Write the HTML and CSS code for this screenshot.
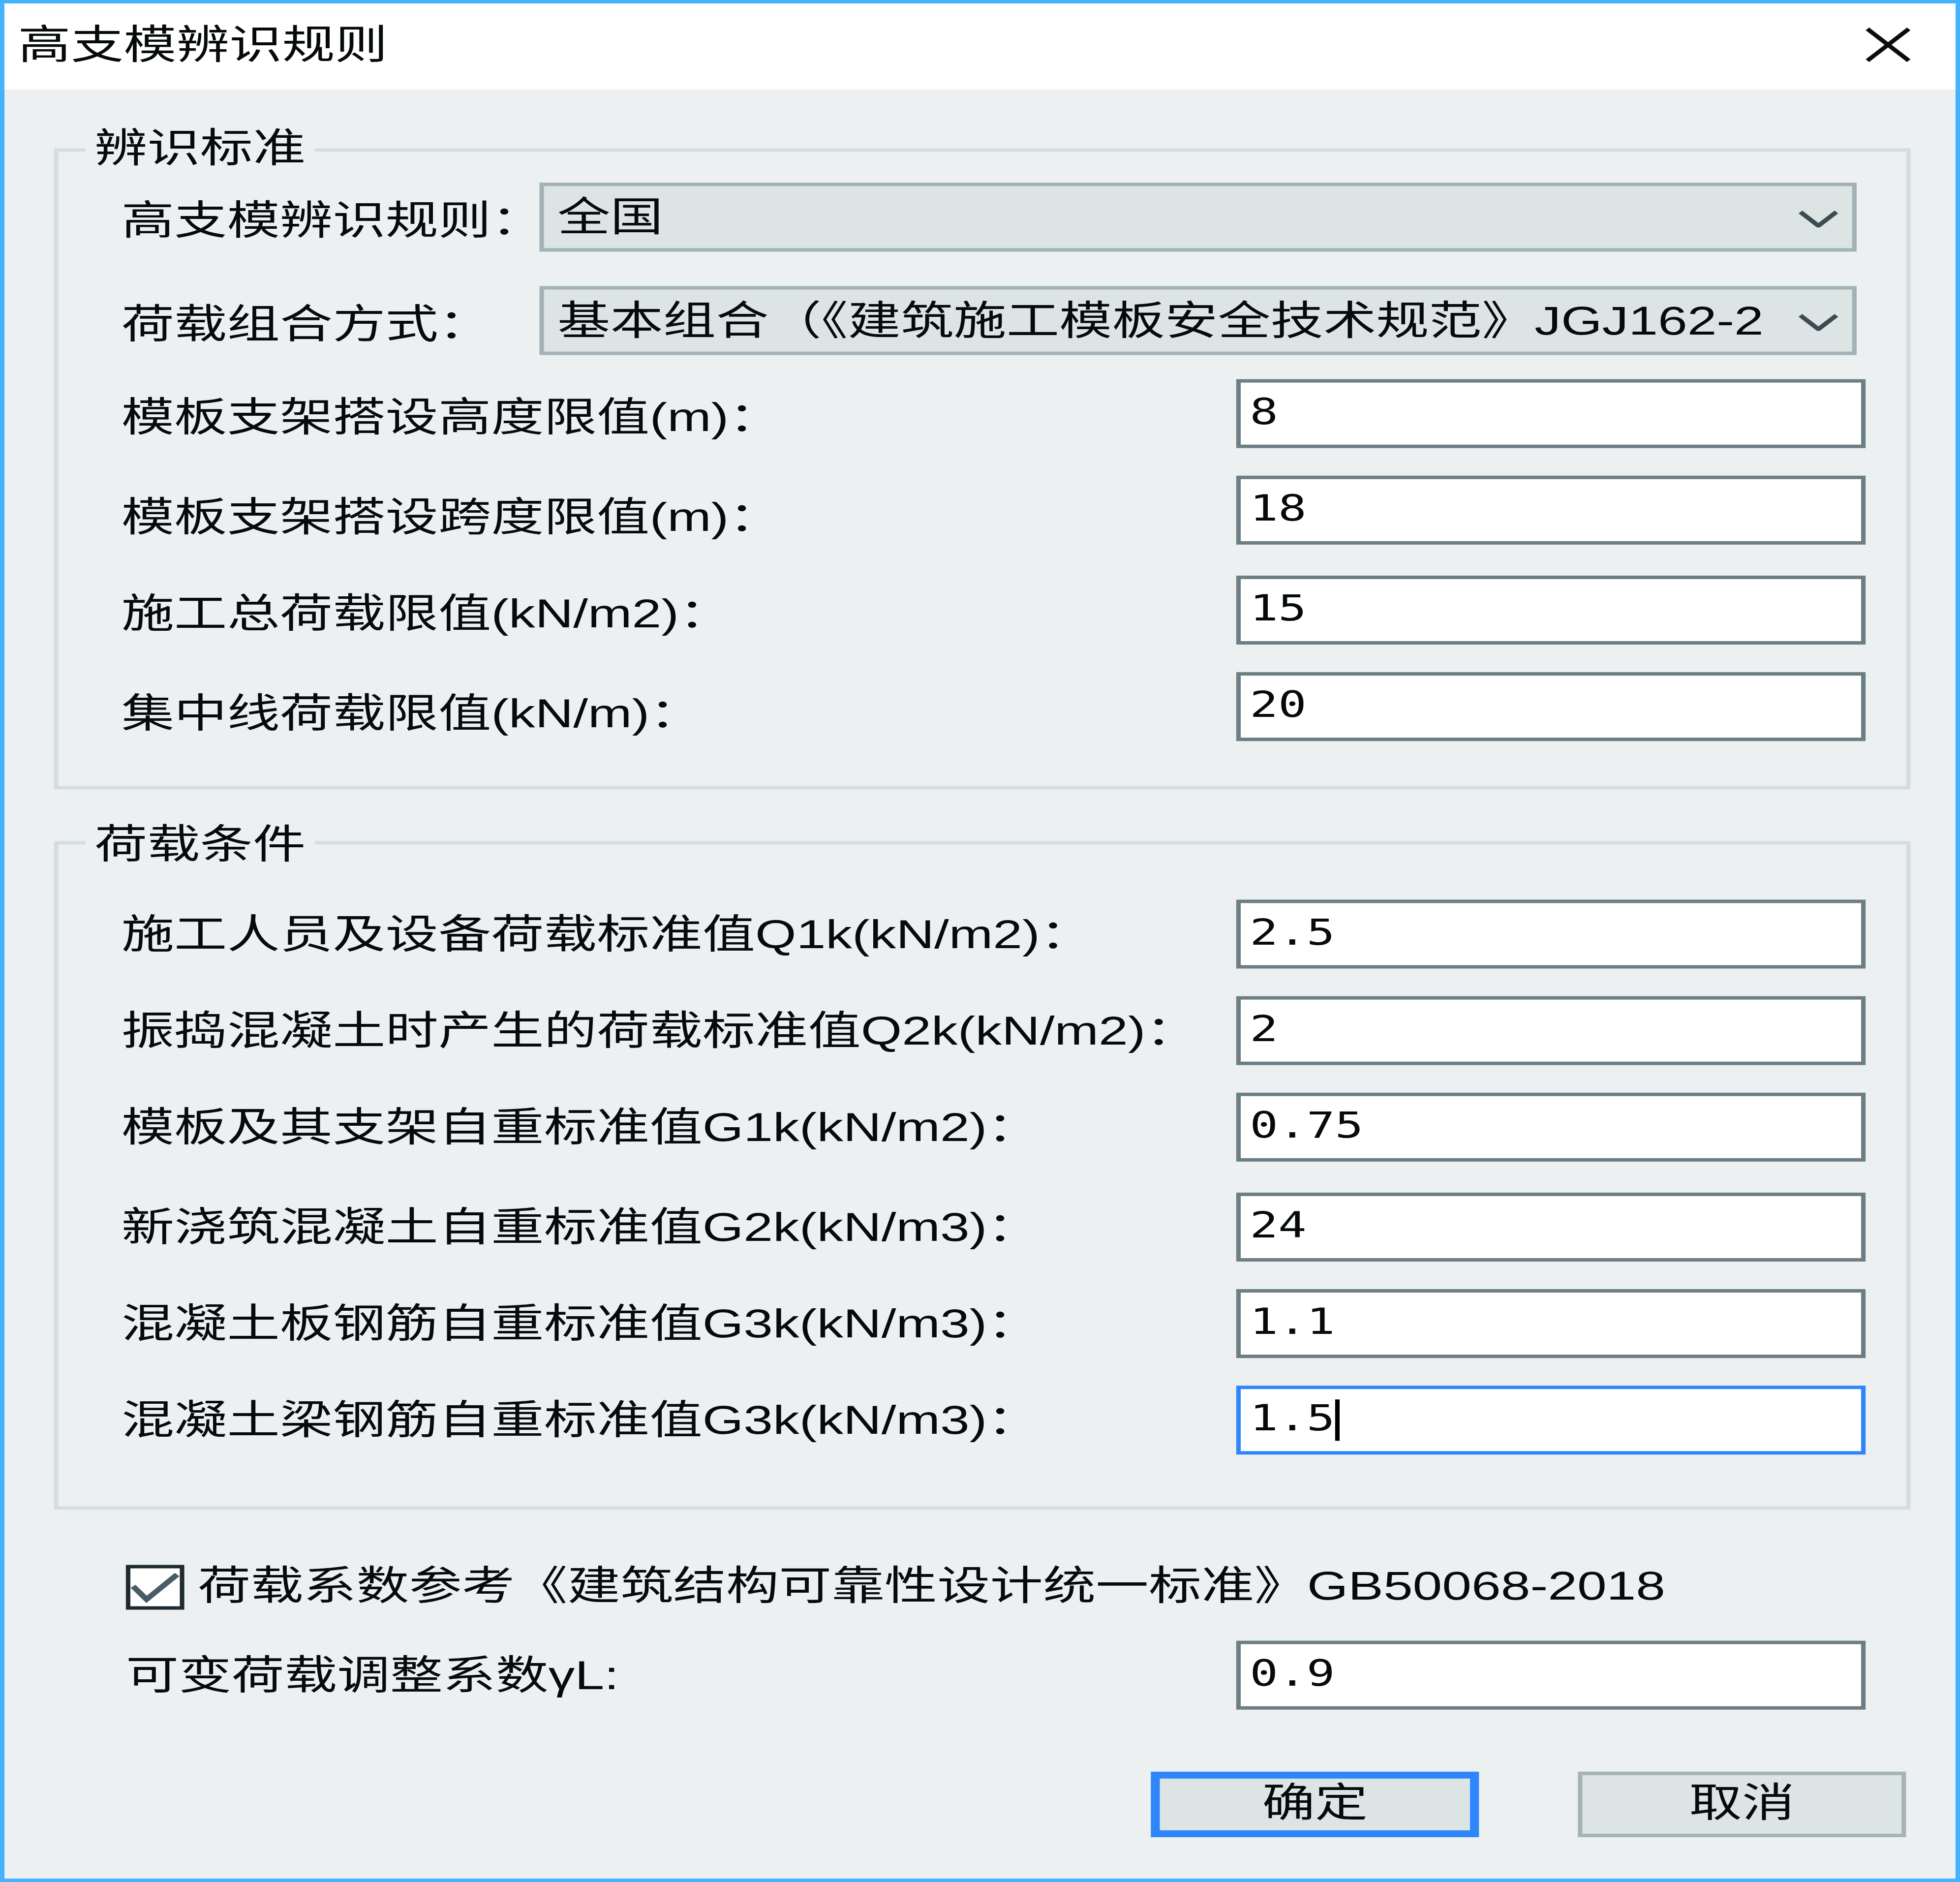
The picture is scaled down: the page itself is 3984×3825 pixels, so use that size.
FILE: index.html
```html
<!DOCTYPE html>
<html lang="zh-CN">
<head>
    <meta charset="UTF-8">
    <meta name="viewport" content="width=device-width, initial-scale=1.0">
    <title>高支模辨识规则</title>
    <link rel="stylesheet" href="styles.css">
</head>
<body>
    <div class="dialog">
        <div class="titlebar">
            <span class="title">高支模辨识规则</span>
            <svg class="close" viewBox="0 0 10 10" width="10" height="10">
                <path d="M0.4 0.4 L9.6 9.6 M9.6 0.4 L0.4 9.6" />
            </svg>
        </div>

        <div class="content">
            <!-- 辨识标准 -->
            <fieldset class="group group-rules">
                <legend>辨识标准</legend>
                <div class="row row-first">
                    <span class="label">高支模辨识规则：</span>
                    <div class="select">
                        <span class="select-text">全国</span>
                        <svg class="arrow" viewBox="0 0 9 5" width="9" height="5"><path d="M0.5 0.5 L4.5 4.5 L8.5 0.5" /></svg>
                    </div>
                </div>
                <div class="row row-select2">
                    <span class="label">荷载组合方式：</span>
                    <div class="select">
                        <span class="select-text">基本组合（《建筑施工模板安全技术规范》JGJ162-2</span>
                        <svg class="arrow" viewBox="0 0 9 5" width="9" height="5"><path d="M0.5 0.5 L4.5 4.5 L8.5 0.5" /></svg>
                    </div>
                </div>
                <div class="row row-input row-after-select">
                    <span class="label">模板支架搭设高度限值(m)：</span>
                    <div class="field">8</div>
                </div>
                <div class="row row-input">
                    <span class="label">模板支架搭设跨度限值(m)：</span>
                    <div class="field">18</div>
                </div>
                <div class="row row-input">
                    <span class="label">施工总荷载限值(kN/m2)：</span>
                    <div class="field">15</div>
                </div>
                <div class="row row-input">
                    <span class="label">集中线荷载限值(kN/m)：</span>
                    <div class="field">20</div>
                </div>
            </fieldset>

            <!-- 荷载条件 -->
            <fieldset class="group group-loads">
                <legend>荷载条件</legend>
                <div class="row row-input row-first">
                    <span class="label">施工人员及设备荷载标准值Q1k(kN/m2)：</span>
                    <div class="field">2.5</div>
                </div>
                <div class="row row-input">
                    <span class="label">振捣混凝土时产生的荷载标准值Q2k(kN/m2)：</span>
                    <div class="field">2</div>
                </div>
                <div class="row row-input">
                    <span class="label">模板及其支架自重标准值G1k(kN/m2)：</span>
                    <div class="field">0.75</div>
                </div>
                <div class="row row-input">
                    <span class="label">新浇筑混凝土自重标准值G2k(kN/m3)：</span>
                    <div class="field">24</div>
                </div>
                <div class="row row-input">
                    <span class="label">混凝土板钢筋自重标准值G3k(kN/m3)：</span>
                    <div class="field">1.1</div>
                </div>
                <div class="row row-input">
                    <span class="label">混凝土梁钢筋自重标准值G3k(kN/m3)：</span>
                    <div class="field focused">1.5<span class="caret"></span></div>
                </div>
            </fieldset>

            <div class="check-row">
                <span class="checkbox">
                    <svg viewBox="0 0 11 11" width="11" height="11"><path d="M0.6 5.2 L3.6 9 L10.4 1.8" /></svg>
                </span>
                <span class="check-label">荷载系数参考《建筑结构可靠性设计统一标准》GB50068-2018</span>
            </div>

            <div class="row row-input row-factor">
                <span class="label">可变荷载调整系数γL:</span>
                <div class="field">0.9</div>
            </div>

            <div class="buttons">
                <button class="btn btn-primary">确定</button>
                <button class="btn">取消</button>
            </div>
        </div>
    </div>
</body>
</html>
```

FILE: styles.css
```css
* {
    box-sizing: border-box;
}
html {
    height: 100%;
    overflow: hidden;
}
body {
    height: 100%;
    margin: 0;
    padding: 0;
    background-color: #ecf0f1;
    font-family: "Liberation Sans", "Noto Sans CJK SC", sans-serif;
    font-size: 11.75px;
    line-height: 12px;
    color: #060a0a;
}

/* the dialog is laid out at its native size and blown up to the screenshot */
.dialog {
    width: 436px;
    height: 546px;
    border: 1px solid #45b2ff;
    background-color: #ecf0f1;
    transform: scale(9.1376, 7.0055);
    transform-origin: 0 0;
    display: flex;
    flex-direction: column;
}

.titlebar {
    height: 24.8px;
    background-color: #fff;
    display: flex;
    align-items: center;
    justify-content: space-between;
    padding: 0 10px 0 3px;
}
.close path {
    stroke: #0a0d0e;
    stroke-width: 1.1;
    fill: none;
}

.content {
    padding: 0 10px 0 11px;
}

.group {
    margin: 0;
    padding: 0 0 13px;
    border: 1px solid #d5dede;
    min-width: 0;
}
.group legend {
    margin-left: 6px;
    padding: 0 2px;
    height: 12px;
    line-height: 12px;
}
.group-rules {
    margin-top: 11.7px;
    padding-top: 3.5px;
}
.group-loads {
    margin-top: 9.5px;
    padding-top: 10px;
    padding-bottom: 15.5px;
}

.row {
    display: flex;
    align-items: center;
    height: 20px;
    padding-left: 14px;
}
.row-select2 {
    margin-top: 10px;
}
.row-input {
    margin-top: 8.5px;
}
.row-after-select {
    margin-top: 7px;
}
.group-loads .row-input {
    margin-top: 8.2px;
}
.group-loads .row-first {
    margin-top: 0;
}
.label {
    flex: 1;
    min-width: 0;
    white-space: nowrap;
}
.group-rules .label {
    padding-top: 3px;
}

.select {
    flex-shrink: 0;
    width: 293px;
    height: 20px;
    margin-right: 11px;
    border: 1px solid #a3b2b6;
    background-color: #dce4e4;
    display: flex;
    align-items: center;
    padding: 0 3px 0 3px;
}
.select-text {
    flex: 1;
    white-space: nowrap;
}
.arrow {
    margin-top: 1px;
}
.arrow path {
    stroke: #3d4b52;
    stroke-width: 1.15;
    fill: none;
}

.field {
    flex-shrink: 0;
    align-self: stretch;
    width: 140px;
    margin-right: 9px;
    border: 1px solid #6a7e84;
    background-color: #fff;
    padding: 2px 2px 0;
    font-family: "DejaVu Sans Mono", "Liberation Mono", monospace;
    font-size: 10.5px;
    line-height: 12px;
}
.field.focused {
    border-color: #2f86fb;
}
.caret {
    display: inline-block;
    width: 1px;
    height: 12.5px;
    background-color: #000;
    vertical-align: -3.5px;
}

.check-row {
    display: flex;
    align-items: center;
    margin-top: 15.5px;
    padding-left: 16px;
    height: 13px;
}
.checkbox {
    width: 13px;
    height: 13px;
    border: 1px solid #1f2a30;
    background-color: #fff;
    display: flex;
}
.checkbox path {
    stroke: #4b5b63;
    stroke-width: 1.4;
    fill: none;
}
.check-label {
    margin-left: 3px;
    white-space: nowrap;
}

.row-factor {
    margin-top: 9px;
    height: 20.5px;
    padding-left: 16px;
}
.row-factor .field {
    margin-right: 10px;
}

.buttons {
    display: flex;
    justify-content: flex-end;
    gap: 22px;
    margin-top: 17.5px;
    padding-right: 1px;
}
.btn {
    width: 73px;
    height: 19px;
    margin: 0;
    padding: 0;
    border: 1px solid #a5b3b7;
    background-color: #dce4e4;
    font-family: "Liberation Sans", "Noto Sans CJK SC", sans-serif;
    font-size: 11.75px;
    line-height: 12px;
    color: #060a0a;
}
.btn-primary {
    border: 2px solid #2f86fb;
}
```
